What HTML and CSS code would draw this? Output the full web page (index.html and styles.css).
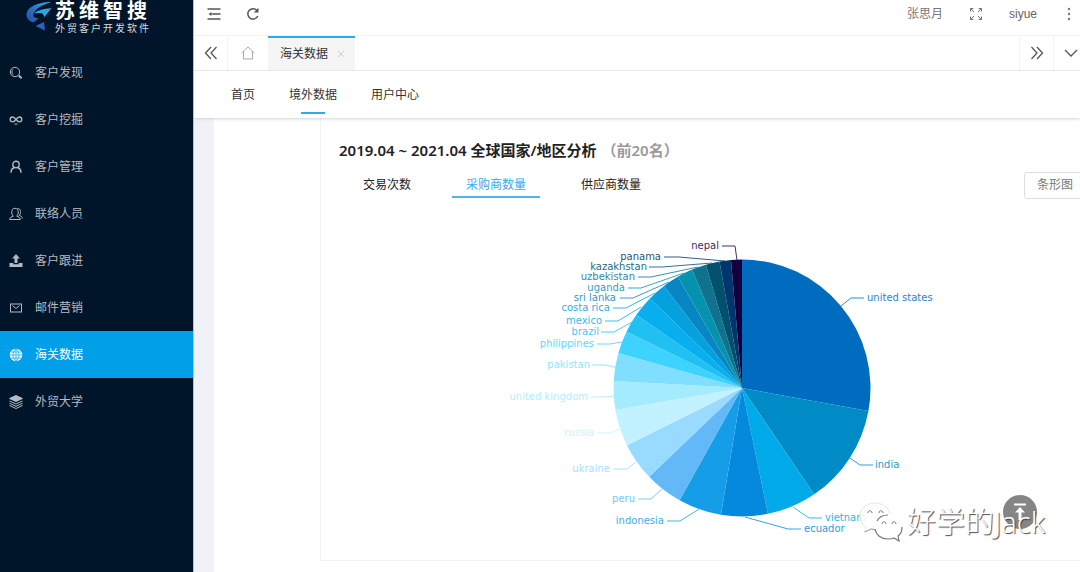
FILE: index.html
```html
<!DOCTYPE html>
<html lang="zh-CN">
<head>
<meta charset="utf-8">
<title>海关数据</title>
<link rel="stylesheet" href="styles.css">
</head>
<body>
<div class="app">
  <aside class="sidebar">
    <div class="logo">
      <svg class="logo-mark" width="27" height="32" viewBox="0 0 27 32" aria-hidden="true">
        <defs><linearGradient id="lg" x1="0" y1="1" x2="1" y2="0"><stop offset="0" stop-color="#2a4ea8"/><stop offset=".5" stop-color="#2577c6"/><stop offset="1" stop-color="#35b5e6"/></linearGradient></defs>
        <path d="M25 2C12 2 .5 7 .5 15c0 3.500 3 6.500 7 7.500l5-4c-4-.5-6-2-5-4.500C9 9 16 5 25 2z" fill="url(#lg)"/>
        <path d="M8 13.500c4-3.500 9-4.500 17.500-5.500L18.500 17l-2-3.500c-3-.8-6-.5-8.500 0z" fill="#2fa5df"/>
        <path d="M9.500 26l8.500-4 1 8.500z" fill="#2c62bb"/>
      </svg>
      <div class="logo-words">
        <div class="logo-name"><span>苏</span><span>维</span><span>智</span><span>搜</span></div>
        <div class="logo-sub"><span>外</span><span>贸</span><span>客</span><span>户</span><span>开</span><span>发</span><span>软</span><span>件</span></div>
      </div>
    </div>
    <nav class="menu">
      <a class="menu-item" href="#"><svg width="14" height="14" viewBox="0 0 14 14"><circle cx="6" cy="6" r="4.700"/><path d="M4 8.500A3.400 3.400 0 0 1 4 3.500"/><path d="M9.800 9.600l2.800 2.600" stroke-width="2"/></svg>客户发现</a>
      <a class="menu-item" href="#"><svg width="14" height="14" viewBox="0 0 14 14"><path d="M7 6.500C5.500 4.500 4.800 4 3.600 4a2.400 2.400 0 0 0 0 4.800C5 8.800 6 7.800 7 6.500S9 4 10.400 4a2.400 2.400 0 0 1 0 4.800C9.200 8.800 8.500 8.200 7 6.500z" stroke-width="1.300"/><path d="M5.500 11h3"/></svg>客户挖掘</a>
      <a class="menu-item" href="#"><svg width="14" height="14" viewBox="0 0 14 14"><circle cx="7" cy="4.500" r="3.200" stroke-width="1.400"/><path d="M2 12.800c0-3 1.500-4.700 3.500-5.300M12 12.800c0-3-1.500-4.700-3.500-5.300" stroke-width="1.400"/></svg>客户管理</a>
      <a class="menu-item" href="#"><svg width="14" height="14" viewBox="0 0 14 14"><path d="M.7 12.500c0-2.300 2-2.600 3.600-3.300C3 8 2.800 6.500 2.800 4.800 2.800 2.500 4 1.300 6 1.300s3.200 1.200 3.200 3.500c0 1.700-.2 3.200-1.500 4.400 1.600.7 3.600 1 3.600 3.300z"/><path d="M8.500 1.500c2 0 3 1.200 3 3.200 0 1.500-.3 2.600-1.300 3.600 1.600.7 3 1.200 3 3.200"/></svg>联络人员</a>
      <a class="menu-item" href="#"><svg width="14" height="14" viewBox="0 0 14 14"><path d="M7 0l4 4.500H8.500V9h-3V4.500H3zM.5 9h3.800v1.300h5.400V9h3.800v4H.5z" fill="currentColor" stroke="none"/></svg>客户跟进</a>
      <a class="menu-item" href="#"><svg width="14" height="14" viewBox="0 0 14 14"><rect x="1.500" y="3" width="11" height="8"/><path d="M3.500 4.500L7 7.500l3.500-3"/></svg>邮件营销</a>
      <a class="menu-item active" href="#"><svg width="14" height="14" viewBox="0 0 14 14"><circle cx="7" cy="7" r="6.200" fill="#fff" stroke="none"/><path d="M7 1v12M1 7h12M2 4h10M2 10h10M7 1C3 4 3 10 7 13M7 1c4 3 4 9 0 12" stroke="#009fe8" stroke-width=".7"/></svg>海关数据</a>
      <a class="menu-item" href="#"><svg width="14" height="14" viewBox="0 0 14 14"><path d="M7 .5l6.500 3L7 6.500.5 3.500z" fill="currentColor"/><path d="M.5 6L7 9l6.500-3M.5 8.300l6.500 3 6.500-3M.5 10.500l6.500 3 6.500-3"/></svg>外贸大学</a>
    </nav>
  </aside>

  <main class="main">
    <header class="topbar">
      <button class="icon-btn" aria-label="收起菜单"><svg width="14" height="14" viewBox="0 0 14 14"><path d="M.5 2h13M6 7h7.500M.5 12h13" stroke-width="1.500"/><path d="M4.500 5v4L1.500 7z" fill="currentColor" stroke="none"/><path d="M3 7h4"/></svg></button>
      <button class="icon-btn refresh" aria-label="刷新"><svg width="14" height="14" viewBox="0 0 14 14"><path d="M11.800 9A5.200 5.200 0 1 1 11 3.500" stroke-width="1.500"/><path d="M12.500.8v4.700H7.800z" fill="currentColor" stroke="none"/></svg></button>
      <div class="account">
        <span class="person">张思月</span>
        <button class="icon-btn" aria-label="全屏"><svg width="14" height="14" viewBox="0 0 14 14"><path d="M1.500 4.500v-3h3M1.500 1.500L5 5M9.500 1.500h3v3M12.500 1.500L9 5M1.500 9.500v3h3M1.500 12.500L5 9M9.500 12.500h3v-3M12.500 12.500L9 9"/></svg></button>
        <a class="user" href="#">siyue</a>
        <button class="icon-btn more" aria-label="更多"><svg width="4" height="14" viewBox="0 0 4 14"><g fill="currentColor" stroke="none"><circle cx="2" cy="2" r="1.200"/><circle cx="2" cy="7" r="1.200"/><circle cx="2" cy="12" r="1.200"/></g></svg></button>
      </div>
    </header>

    <div class="tabs">
      <button class="tab-ctl" aria-label="向左"><svg width="14" height="14" viewBox="0 0 14 14"><path d="M7 1L1.500 7 7 13M12.500 1L7 7l5.500 6" stroke-width="1.300"/></svg></button>
      <button class="tab-home" aria-label="主页"><svg width="14" height="14" viewBox="0 0 14 14"><path d="M.5 7L7 1l6.500 6M2.500 5.500v7.500h9V5.500"/></svg></button>
      <div class="tab-page"><a href="#">海关数据</a><button class="tab-close" aria-label="关闭"><svg width="8" height="8" viewBox="0 0 8 8"><path d="M1 1l6 6M7 1L1 7"/></svg></button></div>
      <button class="tab-ctl right" aria-label="向右"><svg width="14" height="14" viewBox="0 0 14 14"><path d="M1.500 1L7 7l-5.500 6M7 1l5.500 6L7 13" stroke-width="1.300"/></svg></button>
      <button class="tab-ctl last" aria-label="展开"><svg width="14" height="14" viewBox="0 0 14 14"><path d="M1 4l6 6 6-6" stroke-width="1.300"/></svg></button>
    </div>

    <nav class="subnav">
      <a href="#">首页</a>
      <a class="current" href="#">境外数据</a>
      <a href="#">用户中心</a>
    </nav>

    <div class="content">
      <div class="sheet">
        <section class="card">
          <h2 class="title">2019.04 ~ 2021.04 全球国家/地区分析<span>（前20名）</span></h2>
          <div class="metrics">
            <button>交易次数</button>
            <button class="on">采购商数量</button>
            <button>供应商数量</button>
            <button class="bar-btn">条形图</button>
          </div>
          <svg class="chart" height="350" viewBox="321 210 759 350" preserveAspectRatio="xMinYMin meet" role="img" aria-label="采购商数量">
            <g id="slices"></g>
            <g id="labels"></g>
          </svg>
        </section>
      </div>
    </div>
  </main>

  <button class="to-top" aria-label="返回顶部"><svg width="14" height="18" viewBox="0 0 14 18"><path d="M1 1.500h12" stroke="#fff" stroke-width="2"/><path d="M7 4l5 5.500H8.500V17h-3V9.500H2z" fill="#fff" stroke="none"/></svg></button>

  <div class="watermark">
    <svg width="46" height="42" viewBox="0 0 46 42" aria-hidden="true">
      <path d="M16 2C7 2 1 8 1 15c0 5 2 8 6 11l-2 5 6-3c8 2 20-2 20-13C31 8 25 2 16 2z" fill="#fff" fill-opacity=".88" stroke="#d4d4d4" stroke-width=".6"/>
      <path d="M6 31l6-3c2 .6 4 .7 6 .4" stroke="#999"/>
      <path d="M29 14c-8 0-13 5-13 12s5 12 13 12c2 0 4 0 6-1l5 3-1-5c3-2 4-5 4-9 0-7-6-12-14-12z" fill="#fff"/>
      <path d="M18 20c2-4 6-6 11-6M16 28c1 6 6 10 13 10 2 0 4 0 6-1l5 3-1-5c3-2 4-5 4-9" stroke="#777" stroke-width="1.200"/>
      <path d="M9 12c0-3 4-3 4 0M20 12c0-3 4-3 4 0M23 23c0-3 4-3 4 0M33 23c0-3 4-3 4 0" stroke="#777"/>
    </svg>
    <span>好学的Jack</span>
  </div>
</div>
<script src="chart.js"></script>
</body>
</html>
```
FILE: styles.css
```css
* { box-sizing: border-box; }
body {
  margin: 0;
  font: 12px/20px "Noto Sans", "Noto Sans CJK SC", sans-serif;
  color: #333;
  overflow: hidden;
}
a { color: inherit; text-decoration: none; }
button { padding: 0; border: 0; background: none; font: inherit; color: inherit; }
svg { display: block; flex: none; fill: none; stroke: currentColor; stroke-width: 1; }

.app { position: relative; display: flex; min-height: 100vh; }

.sidebar { flex: 0 0 194px; background: #001529; color: #b3bac1; border-right: 1px solid #b9c0ca; }
.logo { display: flex; height: 49px; padding: 0 0 0 26px; gap: 2px; }
.logo-mark { stroke: none; }
.logo-words { display: flex; flex-direction: column; color: #fff; }
.logo-name { display: flex; gap: 4px; font-size: 20px; line-height: 22px; font-weight: 700; }
.logo-sub { display: flex; gap: 2px; font-size: 10px; line-height: 12px; color: #d5dae0; }
.menu-item { display: flex; align-items: center; height: 47px; padding-left: 9px; gap: 12px; }
.menu-item.active { background: #009fe8; color: #fff; }

.main { flex: 1; min-width: 0; display: flex; flex-direction: column; background: #f0f2f7; overflow: hidden; }

.topbar { display: flex; align-items: center; height: 36px; padding: 0 9px 8px 13px; background: #fff; border-bottom: 1px solid #f3f3f3; color: #555; }
.refresh { margin-left: 25px; }
.account { display: flex; align-items: center; gap: 26px; margin-left: auto; color: #777; }
.user { font-family: "Liberation Sans", sans-serif; color: #666; }
.more { margin-left: 4px; }

.tabs { display: flex; height: 35px; background: #fff; border-bottom: 1px solid #ececec; color: #555; }
.tab-ctl { display: flex; flex: 0 0 34px; align-items: center; justify-content: center; border-right: 1px solid #f3f3f3; }
.tab-ctl.right { flex-basis: 35px; margin-left: auto; border-left: 1px solid #f3f3f3; }
.tab-ctl.last { margin-right: -8px; }
.tab-home { display: flex; flex: 0 0 40px; align-items: center; justify-content: center; color: #aaa; }
.tab-page { display: flex; align-items: center; gap: 9px; padding: 0 10px 1px 12px; background: #f5f5f5; border-top: 2px solid #2fa9ec; color: #333; }
.tab-close { color: #ccc; }

.subnav { position: relative; display: flex; gap: 34px; height: 47px; padding-left: 37px; background: #fff; box-shadow: 0 1px 3px #cfd3dc; }
.subnav a { display: flex; flex-direction: column; align-items: center; padding-top: 14px; }
.subnav .current::after { content: ""; width: 24px; height: 2px; margin-top: 7px; background: #2fa9ec; }

.content { flex: 1; padding-left: 20px; }
.sheet { height: 100%; padding-left: 106px; background: #fff; }
.card { border: solid #f3f3f3; border-width: 0 0 1px 1px; }
.title { margin: 0; padding: 20px 0 0 18px; font-size: 15px; line-height: 24px; font-weight: 600; color: #222; }
.title span { margin-left: 5px; color: #999; }
.metrics { display: flex; align-items: center; gap: 30px; height: 48px; padding: 0 0 6px 31px; color: #222; }
.metrics button { padding: 7px 11px 1px; border-bottom: 2px solid transparent; }
.metrics .on { padding: 7px 14px 1px; color: #3aa8ee; border-color: #4db5f1; }
.metrics .bar-btn { margin: 4px -6px 0 auto; height: 27px; padding: 2px 12px; border: 1px solid #ddd; border-radius: 3px; color: #777; }
.chart { width: 100%; font: 10px "DejaVu Sans", sans-serif; }

.to-top { position: absolute; right: 43px; top: 495px; display: flex; align-items: center; justify-content: center; width: 34px; height: 34px; border-radius: 50%; background: #858585; }
.watermark { position: absolute; right: 35px; top: 501px; display: flex; align-items: center; gap: 2px; font-size: 29px; line-height: 42px; font-weight: 300; color: #fff; text-shadow: 1px 1px 1px #444; }
```
FILE: chart.js
```js
const CX = 742, CY = 388, R = 128.5;

// name, colour, slice end on the rim (x, y), text anchor, label x, label centre y, leader points
const data = [
  ["united states", "#006cbf", 868, 411, "start", 867, 298, "841,306 851,298 864,298"],
  ["india", "#008bc6", 814, 494, "start", 875, 465, "850,458 860,465 873,465"],
  ["vietnam", "#00a9e8", 768, 514, "start", 825, 518, "793,507 809,518 822,518"],
  ["ecuador", "#0589dc", 721, 514.5, "start", 804, 529, "745,517 788,529 801,529"],
  ["indonesia", "#169de8", 680, 499.5, "end", 664, 521, "699,509 680,521 667,521"],
  ["peru", "#63b9f8", 649.5, 476.5, "end", 635, 499, "662,489 651,499 638,499"],
  ["ukraine", "#99daff", 627.5, 445, "end", 610, 469, "636,462 627,469 613,469"],
  ["russia", "#c2f1ff", 616, 410, "end", 594, 433, "620,429 610,433 597,433"],
  ["united kingdom", "#a5ebff", 614, 381, "end", 588, 397, "614,396 604,397 591,397"],
  ["pakistan", "#80deff", 618.5, 353, "end", 590, 365, "615,367 605,365 592,365"],
  ["philippines", "#3dd2ff", 627, 332, "end", 594, 344, "622,342 610,344 597,344"],
  ["brazil", "#20c1f2", 638, 316, "end", 599, 332, "632,322 614,332 601,332"],
  ["mexico", "#08afef", 650.5, 299, "end", 602, 321, "641,307 618,321 605,321"],
  ["costa rica", "#05a1df", 664, 286, "end", 610, 308, "655,293 626,308 613,308"],
  ["sri lanka", "#0885c3", 678, 277, "end", 616, 298, "669,282 633,298 620,298"],
  ["uganda", "#0592af", 692, 269.5, "end", 625, 288, "684,273 641,288 628,288"],
  ["uzbekistan", "#0f728e", 706, 265, "end", 635, 277, "698,267 651,277 638,277"],
  ["kazakhstan", "#00506e", 719.5, 261.5, "end", 647, 267, "712,263 662,267 649,267"],
  ["panama", "#00366d", 731, 260, "end", 661, 257, "725,261 679,257 664,257"],
  ["nepal", "#12003f", 742, 259.5, "end", 719, 246, "737,260 735,246 722,246"]
];

const NS = "http://www.w3.org/2000/svg";
function add(parent, tag, attrs, text) {
  const el = document.createElementNS(NS, tag);
  for (const k in attrs) el.setAttribute(k, attrs[k]);
  if (text) el.textContent = text;
  parent.appendChild(el);
}

const slices = document.getElementById("slices");
const labels = document.getElementById("labels");
let from = -Math.PI / 2;
data.forEach(([name, color, x, y, anchor, lx, ly, line], i) => {
  const to = i === data.length - 1 ? -Math.PI / 2 : Math.atan2(y - CY, x - CX);
  const p = a => `${CX + R * Math.cos(a)} ${CY + R * Math.sin(a)}`;
  add(slices, "path", { d: `M${CX} ${CY}L${p(from)}A${R} ${R} 0 0 1 ${p(to)}Z`, fill: color, stroke: "none" });
  add(labels, "polyline", { points: line, stroke: color, fill: "none", opacity: 0.8 });
  add(labels, "text", { x: lx, y: ly + 3, "text-anchor": anchor, fill: color, stroke: "none", opacity: 0.85 }, name);
  from = to;
});
```
